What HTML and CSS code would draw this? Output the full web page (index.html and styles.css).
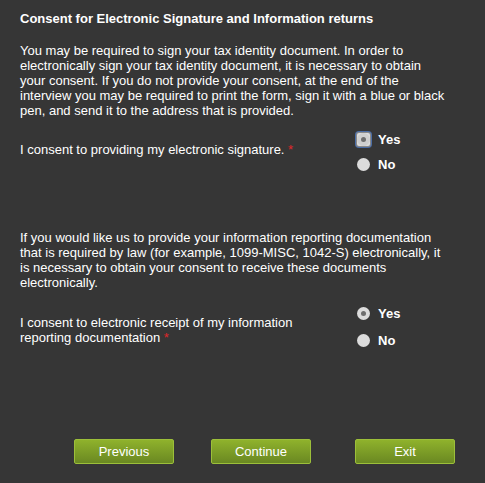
FILE: index.html
```html
<!DOCTYPE html>
<html>
<head>
<meta charset="utf-8">
<link rel="stylesheet" href="styles.css">
</head>
<body>
<div class="page">
  <h1 class="title">Consent for Electronic Signature and Information returns</h1>
  <p class="para">You may be required to sign your tax identity document. In order to electronically sign your tax identity document, it is necessary to obtain your consent. If you do not provide your consent, at the end of the interview you may be required to print the form, sign it with a blue or black pen, and send it to the address that is provided.</p>
  <div class="question q1">
    <div class="qlabel">I consent to providing my electronic signature. <span class="req">*</span></div>
    <div class="options">
      <div class="opt"><span class="radio checked focus"></span><span class="optlabel">Yes</span></div>
      <div class="opt"><span class="radio"></span><span class="optlabel">No</span></div>
    </div>
  </div>
  <p class="para para2">If you would like us to provide your information reporting documentation that is required by law (for example, 1099-MISC, 1042-S) electronically, it is necessary to obtain your consent to receive these documents electronically.</p>
  <div class="question q2">
    <div class="qlabel">I consent to electronic receipt of my information reporting documentation <span class="req">*</span></div>
    <div class="options wide">
      <div class="opt"><span class="radio checked"></span><span class="optlabel">Yes</span></div>
      <div class="opt"><span class="radio"></span><span class="optlabel">No</span></div>
    </div>
  </div>
  <div class="buttons">
    <button class="btn">Previous</button>
    <button class="btn">Continue</button>
    <button class="btn">Exit</button>
  </div>
</div>
</body>
</html>
```
FILE: styles.css
```css
html, body {
  margin: 0;
  padding: 0;
  background: #363636;
}
body {
  width: 485px;
  height: 483px;
  overflow: hidden;
  font-family: "Liberation Sans", Arial, sans-serif;
  color: #ffffff;
  font-size: 13px;
  line-height: 15px;
}
.page {
  padding: 11px 20px 0 20px;
}
.title {
  font-size: 13px;
  font-weight: bold;
  line-height: 16px;
  margin: 0;
}
.para {
  margin: 16px 0 0 0;
  width: 426px;
}
.question {
  display: flex;
  align-items: center;
}
.q1 {
  margin-top: 14px;
}
.qlabel {
  width: 316px;
  padding-bottom: 5px;
}
.q2 .qlabel {
  padding-bottom: 0;
  padding-top: 6px;
}
.req {
  color: #e0262a;
}
.options {
  display: flex;
  flex-direction: column;
  gap: 10px;
  margin-left: 20px;
}
.options.wide {
  gap: 12px;
}
.opt {
  display: flex;
  align-items: center;
  height: 15px;
}
.radio {
  box-sizing: border-box;
  width: 13px;
  height: 13px;
  border-radius: 50%;
  background: #dcdcdc;
  position: relative;
  margin-left: 1px;
}
.radio.checked::after {
  content: "";
  position: absolute;
  left: 4px;
  top: 4px;
  width: 5px;
  height: 5px;
  border-radius: 50%;
  background: #6e6e6e;
}
.radio.focus {
  box-shadow: 0 0 0 1px #8a8a8a, 0 0 0 2px #4b6ea8;
  border-radius: 2px;
}
.radio.focus::before {
  content: "";
  position: absolute;
  inset: 0;
  border-radius: 50%;
  background: #cfcfcf;
}
.radio.focus::after {
  z-index: 1;
}
.optlabel {
  font-weight: bold;
  margin-left: 8px;
}
.para2 {
  margin-top: 58px;
}
.q2 {
  margin-top: 16px;
}
.buttons {
  display: flex;
  margin-top: 91px;
  padding-left: 54px;
  gap: 37px;
}
.btn {
  width: 100px;
  height: 25px;
  border: 1px solid #9cbf3a;
  border-radius: 2px;
  background: linear-gradient(#8fb22c, #6a8822);
  color: #ffffff;
  font-family: "Liberation Sans", Arial, sans-serif;
  font-size: 13px;
  font-weight: normal;
  padding: 0;
}
.btn + .btn + .btn {
  margin-left: 7px;
}
```
